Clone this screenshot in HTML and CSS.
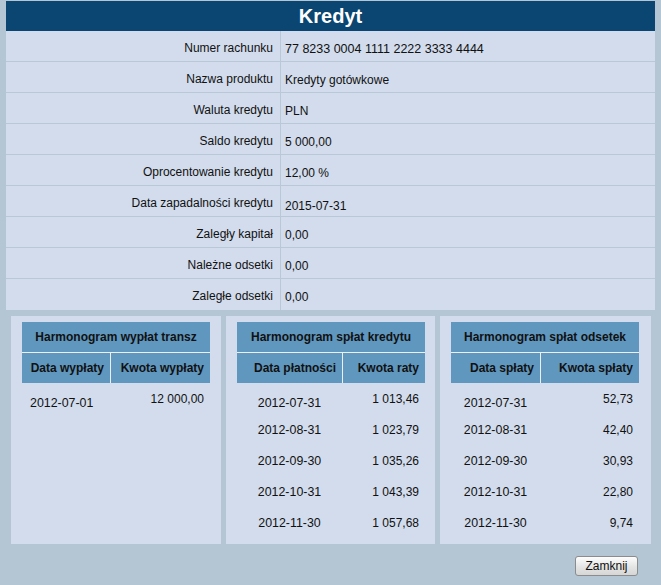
FILE: index.html
```html
<!DOCTYPE html>
<html lang="pl">
<head>
<meta charset="utf-8">
<title>Kredyt</title>
<link rel="stylesheet" href="styles.css">
</head>
<body>
<div class="page">
  <div class="title">Kredyt</div>
  <div class="details">
    <div class="row"><div class="lbl">Numer rachunku</div><div class="val num">77 8233 0004 1111 2222 3333 4444</div></div>
    <div class="row"><div class="lbl">Nazwa produktu</div><div class="val">Kredyty gotówkowe</div></div>
    <div class="row"><div class="lbl">Waluta kredytu</div><div class="val">PLN</div></div>
    <div class="row"><div class="lbl">Saldo kredytu</div><div class="val">5 000,00</div></div>
    <div class="row"><div class="lbl">Oprocentowanie kredytu</div><div class="val">12,00 %</div></div>
    <div class="row"><div class="lbl">Data zapadalności kredytu</div><div class="val val-low">2015-07-31</div></div>
    <div class="row"><div class="lbl">Zaległy kapitał</div><div class="val">0,00</div></div>
    <div class="row"><div class="lbl">Należne odsetki</div><div class="val">0,00</div></div>
    <div class="row last"><div class="lbl">Zaległe odsetki</div><div class="val">0,00</div></div>
  </div>

  <div class="panels">
    <div class="panel">
      <div class="sched s1">
        <div class="sh-title">Harmonogram wypłat transz</div>
        <div class="sh-col">Data wypłaty</div><div class="sh-col">Kwota wypłaty</div>
        <div class="d first">2012-07-01</div><div class="a">12 000,00</div>
      </div>
    </div>
    <div class="panel">
      <div class="sched s2">
        <div class="sh-title">Harmonogram spłat kredytu</div>
        <div class="sh-col">Data płatności</div><div class="sh-col">Kwota raty</div>
        <div class="d first">2012-07-31</div><div class="a">1 013,46</div>
        <div class="d">2012-08-31</div><div class="a">1 023,79</div>
        <div class="d">2012-09-30</div><div class="a">1 035,26</div>
        <div class="d">2012-10-31</div><div class="a">1 043,39</div>
        <div class="d">2012-11-30</div><div class="a">1 057,68</div>
      </div>
    </div>
    <div class="panel">
      <div class="sched s3">
        <div class="sh-title">Harmonogram spłat odsetek</div>
        <div class="sh-col">Data spłaty</div><div class="sh-col">Kwota spłaty</div>
        <div class="d first">2012-07-31</div><div class="a">52,73</div>
        <div class="d">2012-08-31</div><div class="a">42,40</div>
        <div class="d">2012-09-30</div><div class="a">30,93</div>
        <div class="d">2012-10-31</div><div class="a">22,80</div>
        <div class="d">2012-11-30</div><div class="a">9,74</div>
      </div>
    </div>
  </div>

  <div class="footer">
    <button class="btn" type="button">Zamknij</button>
  </div>
</div>
</body>
</html>
```

FILE: styles.css
```css
html, body {
  margin: 0;
  padding: 0;
  background: #b4c6d4;
  font-family: "Liberation Sans", Arial, sans-serif;
  font-size: 12px;
  color: #111;
}

.page {
  width: 649px;
  padding: 1px 0 0 6px;
}

.title {
  height: 30px;
  line-height: 31px;
  background: #0a4671;
  color: #fff;
  font-size: 20px;
  font-weight: bold;
  text-align: center;
}

.details {
  background: #d2dcec;
}

.row {
  display: grid;
  grid-template-columns: 275px 1fr;
  height: 30px;
  border-bottom: 1px solid #b8c8d6;
}

.row.last {
  border-bottom: none;
  height: 31px;
}

.lbl {
  text-align: right;
  padding: 10px 7px 0 0;
  border-right: 1px solid #b8c8d6;
}

.val {
  padding: 11px 0 0 4px;
}

.num {
  font-size: 12.5px;
}

.val-low {
  padding-top: 13px;
}

.panels {
  display: grid;
  grid-template-columns: 210px 209px 211px;
  column-gap: 5px;
  padding: 6px 0 0 5px;
}

.panel {
  background: #d2dcec;
  padding: 6px 11px 4px 11px;
  min-height: 218px;
}

.panel:last-child {
  padding-right: 12px;
}

.sched {
  display: grid;
  width: 188px;
  column-gap: 1px;
  background-image: linear-gradient(#eaf0f6, #eaf0f6);
  background-repeat: no-repeat;
  background-size: 100% 61px;
}

.s1 { grid-template-columns: 88px 99px; }
.s2 { grid-template-columns: 105px 82px; }
.s3 { grid-template-columns: 89px 98px; }

.sh-title {
  grid-column: 1 / -1;
  height: 30px;
  line-height: 30px;
  background: #6097bf;
  font-weight: bold;
  text-align: center;
  border-bottom: 1px solid #eaf0f6;
}

.sh-col {
  height: 30px;
  line-height: 30px;
  background: #6097bf;
  font-weight: bold;
  text-align: right;
  padding-right: 6px;
}

.d, .a {
  height: 31px;
  display: flex;
  align-items: center;
  box-sizing: border-box;
}

.d {
  justify-content: center;
  padding-top: 1px;
  font-size: 12.4px;
}

.d.first {
  padding-top: 8px;
}

.a {
  justify-content: flex-end;
  padding-right: 6px;
}

.s1 .d { justify-content: flex-start; padding-left: 8px; }

.footer {
  display: flex;
  justify-content: flex-end;
  padding: 12px 17px 0 0;
}

.btn {
  width: 63px;
  height: 20px;
  padding: 0;
  font-family: "Liberation Sans", Arial, sans-serif;
  font-size: 12px;
  color: #111;
  background: linear-gradient(#fdfdfd, #e4e4e4 55%, #d6d6d6);
  border: 1px solid #8c8c8c;
  border-radius: 3px;
}
```
